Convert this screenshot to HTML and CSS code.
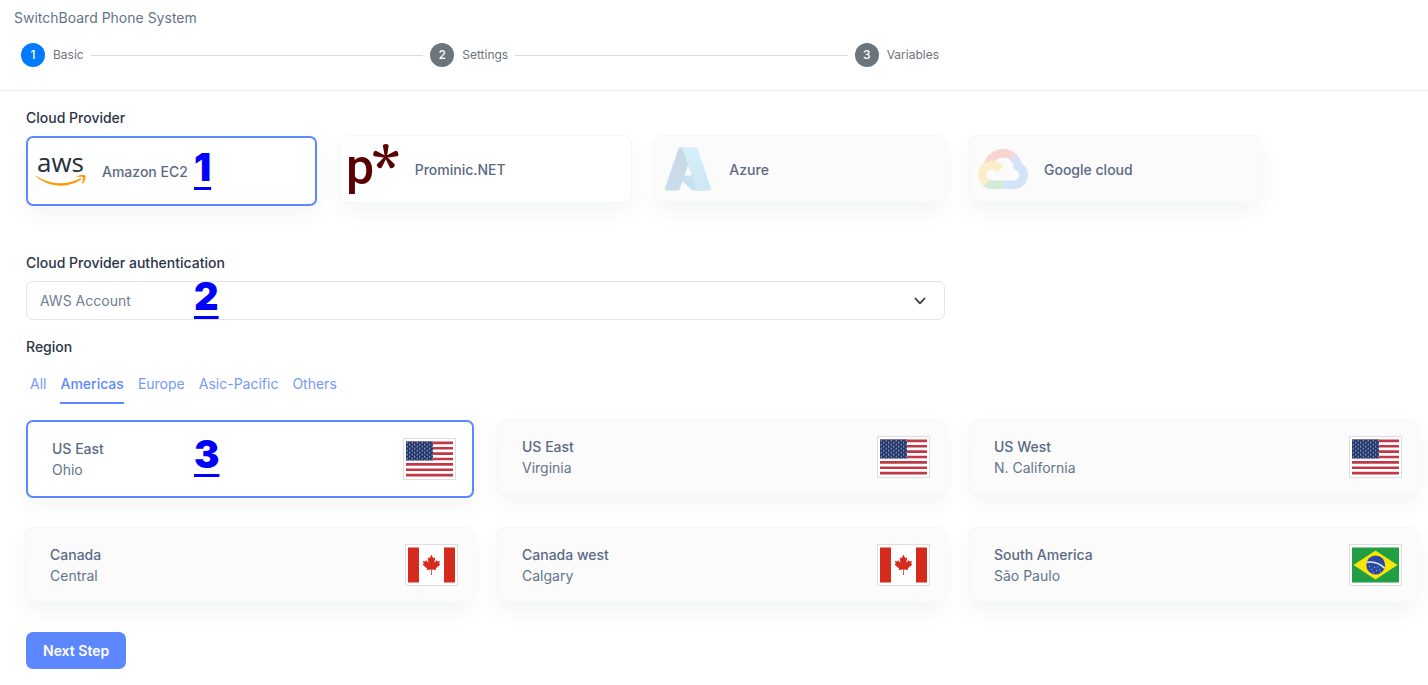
FILE: index.html
```html
<!DOCTYPE html>
<html lang="en">
<head>
<meta charset="utf-8">
<meta name="viewport" content="width=device-width, initial-scale=1">
<title>SwitchBoard Phone System</title>
<link rel="stylesheet" href="styles.css">
</head>
<body>
<svg class="defs" aria-hidden="true">
  <defs>
    <pattern id="stars" width="5" height="4" patternUnits="userSpaceOnUse">
      <rect width="5" height="4" fill="#20356b"/>
      <circle cx="1.2" cy="1.1" r=".7" fill="#fff"/>
      <circle cx="3.7" cy="3.1" r=".7" fill="#fff"/>
    </pattern>
    <symbol id="flag-us" viewBox="0 0 47 35">
      <rect width="47" height="35" fill="#fff"/>
      <path d="M0 1.35h47M0 6.73h47M0 12.1h47M0 17.5h47M0 22.9h47M0 28.27h47M0 33.65h47" stroke="#bf3a45" stroke-width="2.7"/>
      <rect width="27" height="19" fill="url(#stars)"/>
    </symbol>
    <symbol id="flag-ca" viewBox="0 0 47 35">
      <rect width="47" height="35" fill="#fff"/>
      <path d="M0 0h11v35H0zM36 0h11v35H36z" fill="#d52b1e"/>
      <path d="M23.4 7.2l1.9 3.6 1.9-.9-.9 5.3 2.6-2.6.5 1.4 2.6-.4-.9 2.6 1.2.8-4.6 3.9.5 1.7-4.5-.6.2 5.5h-1l.2-5.5-4.5.6.5-1.7-4.6-3.9 1.2-.8-.9-2.6 2.6.4.5-1.4 2.6 2.6-.9-5.3 1.9.9z" fill="#d52b1e"/>
    </symbol>
    <symbol id="flag-br" viewBox="0 0 47 35">
      <rect width="47" height="35" fill="#229e45"/>
      <path d="M1.5 17.5L23.5 3l22 14.5-22 14.5z" fill="#f8e509"/>
      <circle cx="23.7" cy="17.5" r="9.4" fill="#2b49a3"/>
      <path d="M14.9 14.8c7-1 13 1 17.6 6" fill="none" stroke="#dcefe6" stroke-width="1.5"/>
      <path d="M17 19h1M19 22h1M22 20h1M24 23h1M27 22h1M21 25h1M28 24.5h1M25 19.5h1" stroke="#9fb2dd" stroke-width="1"/>
    </symbol>
  </defs>
</svg>

<header class="header">
  <h1 class="title">SwitchBoard Phone System</h1>
  <ol class="steps">
    <li class="step step-active"><span class="step-number">1</span><span>Basic</span></li>
    <li class="step-line" aria-hidden="true"></li>
    <li class="step"><span class="step-number">2</span><span>Settings</span></li>
    <li class="step-line" aria-hidden="true"></li>
    <li class="step"><span class="step-number">3</span><span>Variables</span></li>
  </ol>
</header>

<main class="main">
  <section class="block" aria-labelledby="provider-label">
    <h2 class="label" id="provider-label">Cloud Provider</h2>
    <div class="providers">
      <label class="card provider selected">
        <input class="choice" type="radio" name="provider" checked>
        <svg class="provider-logo" viewBox="0 0 50 50" aria-hidden="true">
          <text class="aws-text" x="1" y="26">aws</text>
          <path d="M1 30.2c13 8.8 30 9 43 2.2 1.2-.5 2 .5.9 1.4C33 42 13.5 42 .6 31c-.6-.6-.2-1.1.4-.8z" fill="#f90"/>
          <path d="M41.3 30.1c2.4-1.5 7.700-1.5 8.2-.6.6 1.2-.5 6.2-3 8.1-.5.4-.9.1-.7-.4.7-1.8 1.8-5 1.2-5.9-.6-.8-3.8-.5-5.3-.3-.6.1-.8-.5-.4-.9z" fill="#f90"/>
        </svg>
        <span class="provider-name">Amazon EC2</span>
      </label>
      <label class="card provider">
        <input class="choice" type="radio" name="provider">
        <svg class="provider-logo" viewBox="0 0 50 50" aria-hidden="true">
          <text class="prominic-text" x="-3" y="40">p</text>
          <g fill="#590000">
            <path id="petal" d="M36 14L34 2.200q-.1-2.200 2.800-2.200t2.800 2.200L37.600 14z"/>
            <use href="#petal" transform="rotate(72 36.8 13)"/>
            <use href="#petal" transform="rotate(144 36.8 13)"/>
            <use href="#petal" transform="rotate(216 36.8 13)"/>
            <use href="#petal" transform="rotate(288 36.8 13)"/>
          </g>
        </svg>
        <span class="provider-name">Prominic.NET</span>
      </label>
      <label class="card provider muted">
        <input class="choice" type="radio" name="provider" disabled>
        <svg class="provider-logo faded" viewBox="0 0 96 96" aria-hidden="true">
          <defs>
            <linearGradient id="az-a" x1="0" y1="0" x2="0" y2="1"><stop stop-color="#114a8b"/><stop offset="1" stop-color="#0669bc"/></linearGradient>
            <linearGradient id="az-b" x1="0" y1="0" x2="0" y2="1"><stop stop-color="#3ccbf4"/><stop offset="1" stop-color="#2892df"/></linearGradient>
          </defs>
          <path fill="url(#az-a)" d="M33.338 6.544h26.038l-27.030 80.087a4.152 4.152 0 0 1-3.933 2.824H8.149a4.145 4.145 0 0 1-3.928-5.470L29.404 9.368a4.152 4.152 0 0 1 3.934-2.825z"/>
          <path fill="#0078d4" d="M71.175 60.261h-41.290a1.911 1.911 0 0 0-1.305 3.309l26.532 24.764a4.171 4.171 0 0 0 2.846 1.121h23.380z"/>
          <path fill="url(#az-b)" d="M66.595 9.364a4.145 4.145 0 0 0-3.928-2.820H33.648a4.146 4.146 0 0 1 3.928 2.820l25.184 74.620a4.146 4.146 0 0 1-3.928 5.472h29.020a4.146 4.146 0 0 0 3.927-5.472z"/>
        </svg>
        <span class="provider-name">Azure</span>
      </label>
      <label class="card provider muted">
        <input class="choice" type="radio" name="provider" disabled>
        <svg class="provider-logo faded" viewBox="0 -25 256 256" aria-hidden="true">
          <path fill="#ea4335" d="M170.252 56.819l22.253-22.253 1.483-9.370C153.437-11.677 88.976-7.496 52.420 33.920 42.267 45.423 34.734 59.764 30.717 74.573l7.970-1.123 44.505-7.340 3.436-3.513c19.797-21.742 53.270-24.667 76.128-6.168z"/>
          <path fill="#4285f4" d="M224.205 73.918a100.249 100.249 0 0 0-30.217-48.722l-31.232 31.232a55.515 55.515 0 0 1 20.379 44.037v5.544c15.350 0 27.797 12.445 27.797 27.796 0 15.352-12.446 27.485-27.797 27.485h-55.671v44.505h55.670c39.930.311 72.553-31.494 72.864-71.424a72.303 72.303 0 0 0-31.793-60.453"/>
          <path fill="#34a853" d="M71.870 205.796h55.593V161.290H71.870a27.275 27.275 0 0 1-11.400-2.498l-32.248 32.247c12.567 9.489 27.900 14.825 43.647 14.757"/>
          <path fill="#fbbc05" d="M71.870 61.425C31.940 61.664-.237 94.228.001 134.158a72.301 72.301 0 0 0 28.222 56.880l32.248-32.246c-13.990-6.322-20.208-22.786-13.887-36.776 6.320-13.990 22.786-20.208 36.775-13.888a27.796 27.796 0 0 1 13.887 13.888l32.248-32.248A72.224 72.224 0 0 0 71.870 61.425z"/>
        </svg>
        <span class="provider-name">Google cloud</span>
      </label>
    </div>
  </section>

  <div class="field">
    <label class="label" for="account">Cloud Provider authentication</label>
    <div class="select-wrap">
      <select class="select" id="account"><option>AWS Account</option></select>
      <svg class="chevron" viewBox="0 0 16 16" aria-hidden="true"><path d="M3.500 5.500L8 10.300l4.500-4.800" fill="none" stroke="#343a40" stroke-width="1.800" stroke-linecap="round" stroke-linejoin="round"/></svg>
    </div>
  </div>

  <section aria-labelledby="region-label">
    <h2 class="label" id="region-label">Region</h2>
    <nav class="tabs">
      <a class="tab" href="#all">All</a>
      <a class="tab tab-active" href="#americas">Americas</a>
      <a class="tab" href="#europe">Europe</a>
      <a class="tab" href="#asia">Asic-Pacific</a>
      <a class="tab" href="#others">Others</a>
    </nav>
    <div class="regions">
      <label class="card region selected">
        <input class="choice" type="radio" name="region" checked>
        <span class="region-text"><span class="region-name">US East</span><span>Ohio</span></span>
        <svg class="flag" aria-hidden="true"><use href="#flag-us"/></svg>
      </label>
      <label class="card region muted">
        <input class="choice" type="radio" name="region">
        <span class="region-text"><span class="region-name">US East</span><span>Virginia</span></span>
        <svg class="flag" aria-hidden="true"><use href="#flag-us"/></svg>
      </label>
      <label class="card region muted">
        <input class="choice" type="radio" name="region">
        <span class="region-text"><span class="region-name">US West</span><span>N. California</span></span>
        <svg class="flag" aria-hidden="true"><use href="#flag-us"/></svg>
      </label>
      <label class="card region muted">
        <input class="choice" type="radio" name="region">
        <span class="region-text"><span class="region-name">Canada</span><span>Central</span></span>
        <svg class="flag" aria-hidden="true"><use href="#flag-ca"/></svg>
      </label>
      <label class="card region muted">
        <input class="choice" type="radio" name="region">
        <span class="region-text"><span class="region-name">Canada west</span><span>Calgary</span></span>
        <svg class="flag" aria-hidden="true"><use href="#flag-ca"/></svg>
      </label>
      <label class="card region muted">
        <input class="choice" type="radio" name="region">
        <span class="region-text"><span class="region-name">South America</span><span>São Paulo</span></span>
        <svg class="flag" aria-hidden="true"><use href="#flag-br"/></svg>
      </label>
    </div>
  </section>

  <button class="next" type="button">Next Step</button>
</main>

<a class="marker marker-one" href="#provider-label">1</a>
<a class="marker marker-two" href="#account">2</a>
<a class="marker marker-three" href="#region-label">3</a>
</body>
</html>
```
FILE: styles.css
```css
*,
*::before,
*::after {
  box-sizing: border-box;
}

body {
  position: relative;
  margin: 0;
  background: #fff;
  color: #64748b;
  font-family: Inter, "Open Sans", sans-serif;
  font-size: 14px;
  line-height: 20px;
}

.defs {
  position: absolute;
  width: 0;
  height: 0;
}

.header {
  padding: 8px 0 23px;
  border-bottom: 1px solid #e9ecf6;
}

.title {
  margin: 0 14px 15px;
  font-size: 14px;
  font-weight: 400;
}

.steps {
  display: flex;
  align-items: center;
  gap: 7px;
  width: 66.67%;
  margin: 0;
  padding: 0 13px 0 21px;
  list-style: none;
  color: #6c757d;
  font-size: 12px;
}

.step {
  display: flex;
  align-items: center;
  gap: 8px;
}

.step-number {
  display: grid;
  place-items: center;
  width: 24px;
  height: 24px;
  border-radius: 50%;
  background: #6c757d;
  color: #fff;
  font-weight: 500;
}

.step-active .step-number {
  background: #007bff;
}

.step-line {
  flex: 1;
  height: 1px;
  background: #d9dcdf;
}

.main {
  padding: 17px 9px 16px 25px;
}

.label {
  display: block;
  margin: 0 1px 7px;
  color: #2a3547;
  font-size: 14px;
  font-weight: 500;
}

.providers {
  display: grid;
  grid-template-columns: repeat(9, 1fr);
  gap: 22px;
  align-items: start;
}

.card {
  position: relative;
  display: flex;
  align-items: center;
  border: 1px solid #f6f7f8;
  border-radius: 9px;
  background: #fff;
  box-shadow: 0 9px 20px rgba(40, 50, 80, 0.05);
  cursor: pointer;
}

.muted {
  background: #fbfbfb;
}

.selected {
  margin: 1px 1px 0;
  border: 2px solid #5d87ff;
  border-radius: 7px;
  background: #fff;
}

.choice {
  position: absolute;
  opacity: 0;
}

.provider {
  grid-column: span 2;
  gap: 16px;
  padding: 8px;
  color: #5a6a85;
  font-weight: 500;
}

.provider-name {
  padding-top: 2px;
}

.provider-logo {
  width: 50px;
  height: 50px;
  overflow: visible;
}

.faded {
  opacity: 0.2;
}

.aws-text {
  fill: #252f3e;
  font-family: "Open Sans", sans-serif;
  font-size: 26px;
  font-weight: 500;
}

.prominic-text {
  fill: #590000;
  font-family: Roboto, sans-serif;
  font-size: 50px;
  font-weight: 500;
}

.field {
  width: calc(66.67% - 7px);
  padding: 47px 2px 17px 1px;
}

.field .label {
  margin: 0 0 8px;
}

.select-wrap {
  position: relative;
}

.select {
  display: block;
  width: 100%;
  height: 39px;
  padding: 0 40px 0 13px;
  border: 1px solid #dfe5ef;
  border-radius: 7px;
  background: #fff;
  color: #6f7c94;
  font: inherit;
  appearance: none;
}

.chevron {
  position: absolute;
  top: 12px;
  right: 17px;
  width: 16px;
  height: 16px;
  pointer-events: none;
}

.tabs {
  display: flex;
  gap: 14px;
  margin: 17px 5px 15px;
}

.tab {
  padding-bottom: 8px;
  border-bottom: 2px solid transparent;
  color: #7698fb;
  text-decoration: none;
}

.tab-active {
  border-color: #5d87ff;
  color: #5d87ff;
  font-weight: 500;
}

.regions {
  display: grid;
  grid-template-columns: repeat(3, 1fr);
  gap: 29px 22px;
  align-items: start;
}

.region {
  justify-content: space-between;
  padding: 16px 16px 16px 24px;
}

.region-text {
  display: grid;
  line-height: 21px;
}

.region-name {
  color: #5a6a85;
  font-weight: 500;
}

.flag {
  width: 53px;
  height: 42px;
  padding: 2px;
  border: 1px solid #dcdee0;
  background: #fff;
}

.next {
  display: block;
  height: 37px;
  margin: 29px 1px 0;
  padding: 0 17px;
  border: 0;
  border-radius: 7px;
  background: #5d87ff;
  color: #fff;
  font: inherit;
  font-weight: 600;
}

.marker {
  position: absolute;
  left: 194px;
  color: #00f;
  font-family: Inter, "Open Sans", sans-serif;
  font-size: 38px;
  font-weight: 900;
  line-height: 44px;
  text-decoration-thickness: 3px;
  text-decoration-skip-ink: none;
  text-underline-offset: 6px;
}

.marker-one {
  top: 145px;
}

.marker-two {
  top: 274px;
}

.marker-three {
  top: 432px;
}
```
